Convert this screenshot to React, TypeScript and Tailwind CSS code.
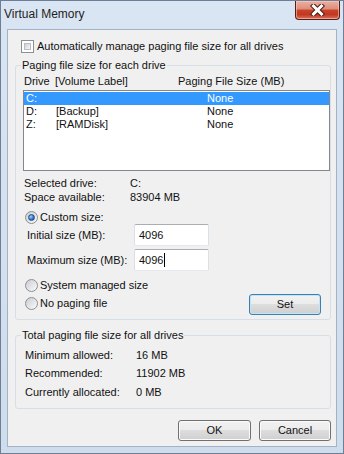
import React from "react";

function Checkbox() {
  return (
    <span className="w-[13px] h-[13px] border border-[#8e8f8f] bg-white p-[2px] shrink-0 flex">
      <span className="flex-1 bg-[linear-gradient(135deg,#cbcfd5,#f6f6f6)] border border-[#b9bec4]" />
    </span>
  );
}

function Radio({ checked }: { checked?: boolean }) {
  return (
    <span className="w-[13px] h-[13px] rounded-full border border-[#8e8f8f] bg-[linear-gradient(135deg,#c9cdd3,#fbfbfb)] shrink-0 flex items-center justify-center">
      {checked && (
        <span className="w-[7px] h-[7px] rounded-full bg-[radial-gradient(circle_at_35%_35%,#9fd2ff,#2a73c9_60%,#0d3f86)] border border-[#2a4f85]" />
      )}
    </span>
  );
}

function Btn({ children, focused, w }: { children: React.ReactNode; focused?: boolean; w: string }) {
  return (
    <div
      className={
        "h-[21px] rounded-[3px] border flex items-center justify-center bg-[linear-gradient(#f2f2f2_0%,#ebebeb_50%,#dddddd_50%,#cfcfcf_100%)] " +
        (focused
          ? "border-[#3c7fb1] shadow-[inset_0_0_0_1px_#bfe5f8] "
          : "border-[#707070] shadow-[inset_0_0_0_1px_#fbfbfb] ") +
        w
      }
    >
      {children}
    </div>
  );
}

function TextBox({ value, caret }: { value: string; caret?: boolean }) {
  return (
    <div className="w-[75px] h-[22px] bg-white border border-[#dbdfe6] border-t-[#abadb3] border-b-[#e3e9ef] rounded-[2px] flex items-center pl-[4px]">
      <span>{value}</span>
      {caret && <span className="w-[1px] h-[14px] bg-black ml-[1px]" />}
    </div>
  );
}

export default function App() {
  return (
    <div className="w-[344px] h-[454px] flex flex-col border border-[#6d7f97] bg-[linear-gradient(#dae5f3,#cfdcec)] text-[11px] leading-[15px] text-[#111] whitespace-nowrap [font-family:'Liberation_Sans',Arial,sans-serif] overflow-hidden">
      {/* Title bar */}
      <div className="h-[28px] flex items-start justify-between">
        <div className="pl-[3px] pt-[6px] text-[12px] text-[#1e1e1e]">Virtual Memory</div>
        <div className="mr-[3px] w-[45px] h-[19px] rounded-b-[4px] border border-t-0 border-[#5a1d15] bg-[linear-gradient(#eab0a2_0%,#dd8d7a_45%,#c8432d_50%,#c23820_75%,#d8735c_100%)] shadow-[inset_0_0_0_1px_rgba(255,210,200,0.55)] flex items-center justify-center">
          <svg width="15" height="12" viewBox="0 0 15 12">
            <path d="M3.5 2 L11.5 10 M11.5 2 L3.5 10" stroke="#4a1a12" strokeWidth="5" strokeLinecap="square" />
            <path d="M3.5 2 L11.5 10 M11.5 2 L3.5 10" stroke="#ffffff" strokeWidth="3" strokeLinecap="square" />
          </svg>
        </div>
      </div>

      {/* Client area */}
      <div className="flex-1 mx-[6px] mb-[6px] border border-[#a3b3c7] bg-[#f0f0f0] flex flex-col">
        {/* Auto manage */}
        <div className="pt-[9px] pl-[13px] h-[24px] flex items-center gap-[2px]">
          <Checkbox />
          <span className="ml-[1px]">Automatically manage paging file size for all drives</span>
        </div>

        {/* Paging file size for each drive */}
        <fieldset className="mt-[4px] ml-[7px] mr-[5px] border border-[#d5dfe5] rounded-[3px] pl-[7px] pr-0 pb-[4px]">
          <legend className="ml-[-2px] px-[1px] leading-[15px]">Paging file size for each drive</legend>
          <div className="mt-[1px] h-[15px] flex pl-[1px]">
            <span className="w-[31px]">Drive</span>
            <span className="w-[123px]">[Volume Label]</span>
            <span>Paging File Size (MB)</span>
          </div>
          <div className="mt-[1px] h-[81px] border border-[#828790] bg-white pt-[1px] flex flex-col leading-[13px]">
            <div className="h-[13px] flex pl-[2px] bg-[#3399ff] text-white">
              <span className="w-[30px]">C:</span>
              <span className="w-[151px]"></span>
              <span>None</span>
            </div>
            <div className="h-[13px] flex pl-[2px]">
              <span className="w-[30px]">D:</span>
              <span className="w-[151px]">[Backup]</span>
              <span>None</span>
            </div>
            <div className="h-[13px] flex pl-[2px]">
              <span className="w-[30px]">Z:</span>
              <span className="w-[151px]">[RAMDisk]</span>
              <span>None</span>
            </div>
          </div>

          <div className="mt-[5px] flex flex-col leading-[14px] pl-[1px]">
            <div className="h-[14px] flex">
              <span className="w-[106px]">Selected drive:</span>
              <span>C:</span>
            </div>
            <div className="h-[14px] flex">
              <span className="w-[106px]">Space available:</span>
              <span>83904 MB</span>
            </div>
          </div>

          <div className="mt-[6px] h-[14px] flex items-center gap-[2px] pl-[2px]">
            <Radio checked />
            <span>Custom size:</span>
          </div>

          <div className="h-[22px] flex items-center pl-[4px]">
            <span className="w-[107px]">Initial size (MB):</span>
            <TextBox value="4096" />
          </div>
          <div className="mt-[3px] h-[22px] flex items-center pl-[4px]">
            <span className="w-[107px]">Maximum size (MB):</span>
            <TextBox value="4096" caret />
          </div>

          <div className="mt-[7px] flex justify-between">
            <div className="flex flex-col gap-[4px] pl-[2px]">
              <div className="h-[14px] flex items-center gap-[2px]">
                <Radio />
                <span>System managed size</span>
              </div>
              <div className="h-[14px] flex items-center gap-[2px]">
                <Radio />
                <span>No paging file</span>
              </div>
            </div>
            <div className="pt-[16px] mr-[9px]">
              <Btn focused w="w-[72px]">Set</Btn>
            </div>
          </div>
        </fieldset>

        {/* Total paging file size */}
        <fieldset className="mt-[8px] ml-[7px] mr-[5px] border border-[#d5dfe5] rounded-[3px] pl-[7px] pr-0 pb-[7px]">
          <legend className="ml-[-2px] px-[1px] leading-[15px]">Total paging file size for all drives</legend>
          <div className="mt-[3px] flex flex-col pl-[2px] leading-[18px]">
            <div className="h-[18px] flex">
              <span className="w-[111px]">Minimum allowed:</span>
              <span>16 MB</span>
            </div>
            <div className="h-[18px] flex">
              <span className="w-[111px]">Recommended:</span>
              <span>11902 MB</span>
            </div>
            <div className="h-[18px] flex mt-[1px]">
              <span className="w-[111px]">Currently allocated:</span>
              <span>0 MB</span>
            </div>
          </div>
        </fieldset>

        <div className="mt-[11px] mr-[5px] flex justify-end gap-[8px]">
          <Btn w="w-[73px]">OK</Btn>
          <Btn w="w-[72px]">Cancel</Btn>
        </div>
      </div>
    </div>
  );
}
